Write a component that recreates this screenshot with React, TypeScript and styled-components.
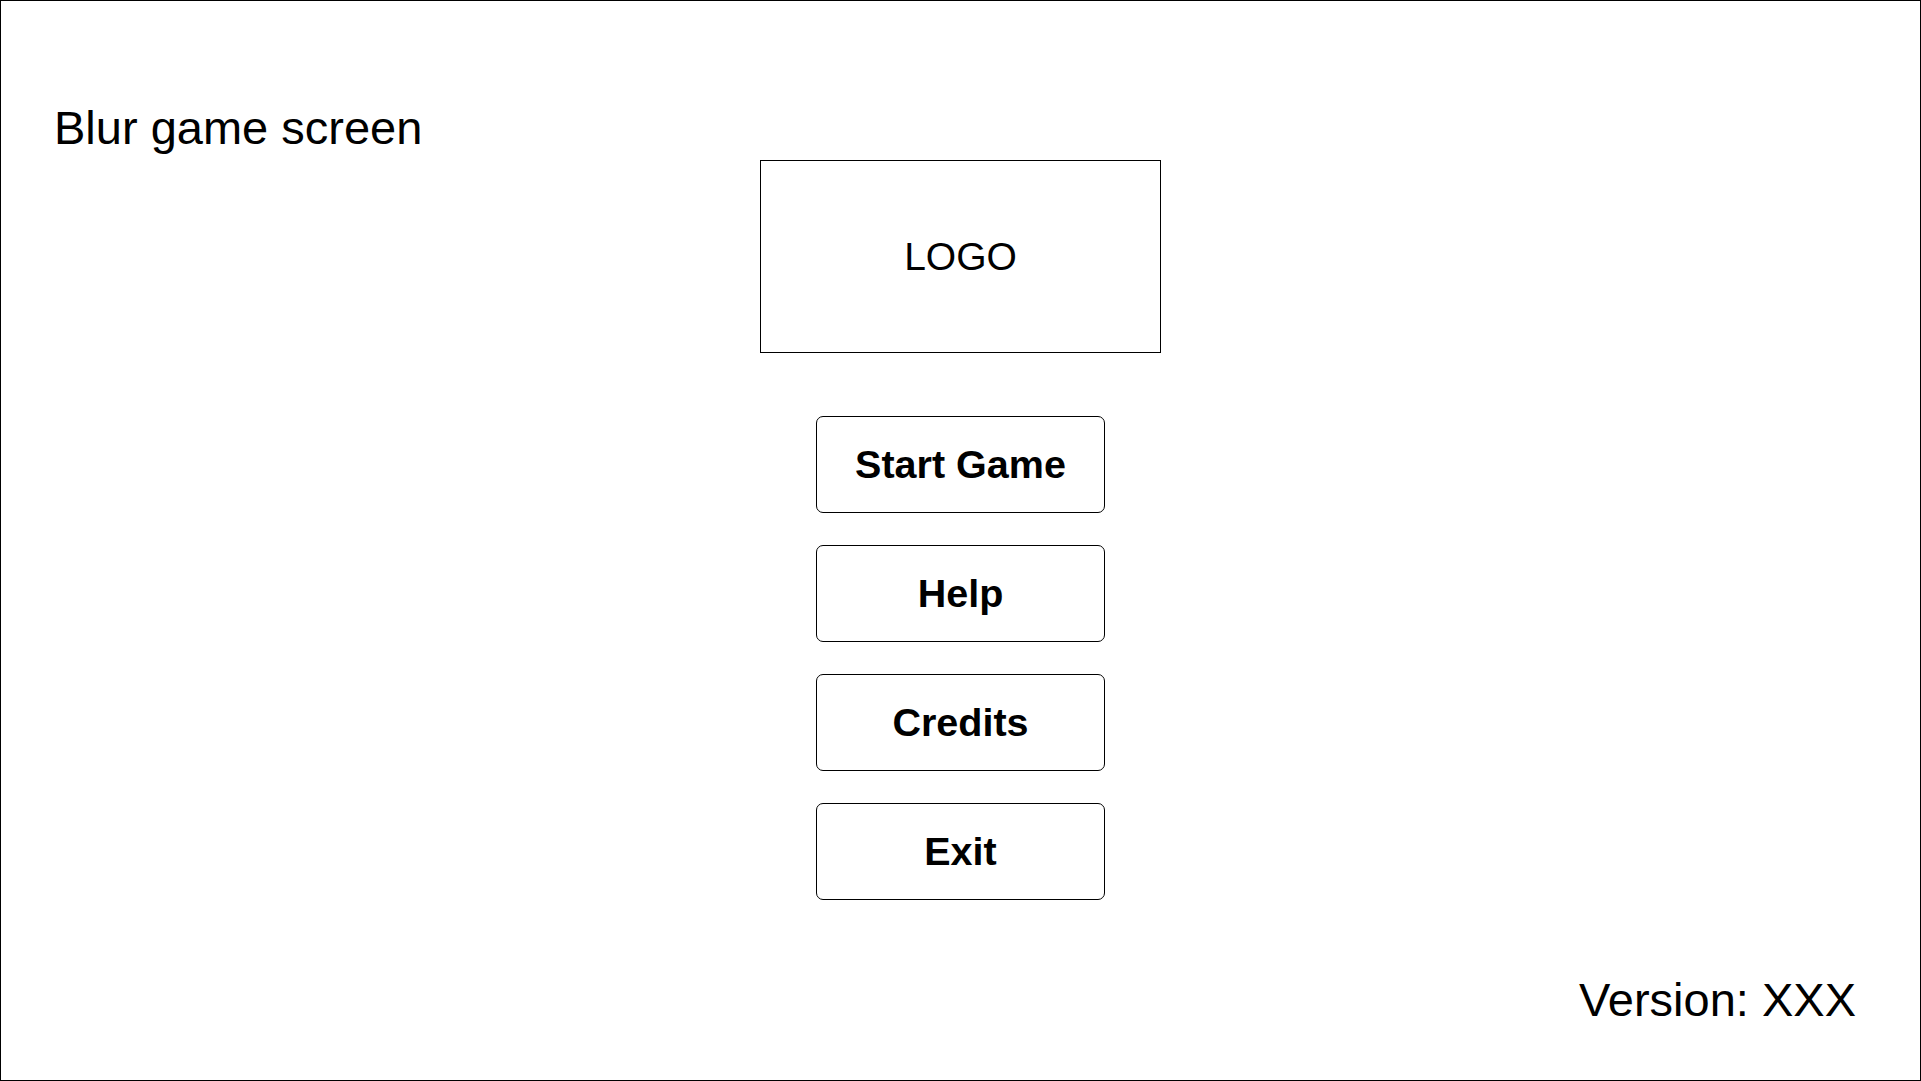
import React from "react";
import styled, { createGlobalStyle } from "styled-components";

const GlobalStyle = createGlobalStyle`
  html, body {
    margin: 0;
    padding: 0;
    background: #ffffff;
  }
  body {
    font-family: "Liberation Sans", Arial, sans-serif;
    color: #000000;
  }
`;

const Frame = styled.div`
  box-sizing: border-box;
  width: 1921px;
  height: 1081px;
  border: 1px solid #000000;
  display: flex;
  flex-direction: column;
  padding: 103px 64px 57px 53px;
  overflow: hidden;
`;

const Title = styled.h1`
  margin: 0;
  font-family: "Liberation Sans", Arial, sans-serif;
  font-weight: 400;
  font-size: 47px;
  line-height: 1;
  align-self: flex-start;
`;

const Center = styled.main`
  display: flex;
  flex-direction: column;
  align-items: center;
  margin: 9px -64px 0 -53px;
`;

const LogoBox = styled.div`
  box-sizing: border-box;
  width: 401px;
  height: 193px;
  border: 1px solid #000000;
  display: flex;
  align-items: center;
  justify-content: center;
  font-size: 39px;
  line-height: 1;
`;

const Menu = styled.nav`
  display: flex;
  flex-direction: column;
  gap: 32px;
  margin-top: 63px;
`;

const MenuButton = styled.button`
  box-sizing: border-box;
  width: 289px;
  height: 97px;
  border: 1px solid #000000;
  border-radius: 7px;
  background: #ffffff;
  color: #000000;
  font-family: "Liberation Sans", Arial, sans-serif;
  font-weight: 700;
  font-size: 39.5px;
  line-height: 1;
  padding: 0;
  display: flex;
  align-items: center;
  justify-content: center;
  cursor: pointer;
`;

const Footer = styled.footer`
  margin-top: auto;
  display: flex;
  justify-content: flex-end;
  font-size: 47px;
  line-height: 1;
`;

const items = ["Start Game", "Help", "Credits", "Exit"];

export default function App() {
  return (
    <>
      <GlobalStyle />
      <Frame>
        <Title>Blur game screen</Title>
        <Center>
          <LogoBox>LOGO</LogoBox>
          <Menu>
            {items.map((label) => (
              <MenuButton key={label}>{label}</MenuButton>
            ))}
          </Menu>
        </Center>
        <Footer>Version: XXX</Footer>
      </Frame>
    </>
  );
}
